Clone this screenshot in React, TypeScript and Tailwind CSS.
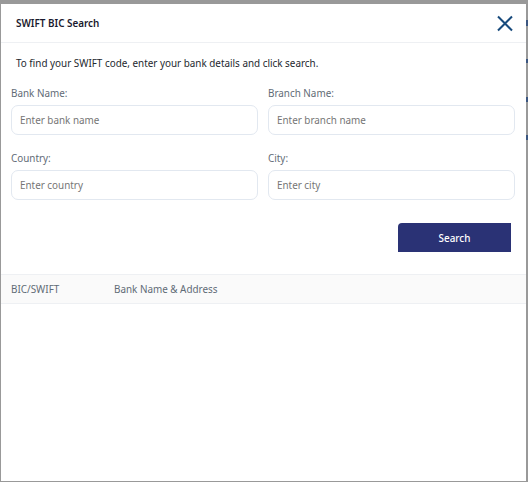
const FIELDS = [
  [
    { label: "Bank Name:", placeholder: "Enter bank name" },
    { label: "Branch Name:", placeholder: "Enter branch name" },
  ],
  [
    { label: "Country:", placeholder: "Enter country" },
    { label: "City:", placeholder: "Enter city" },
  ],
];

// bits of the page behind the modal that show in the right edge
const BEHIND = [
  { top: 20, height: 6 },
  { top: 59, height: 4 },
  { top: 97, height: 5 },
  { top: 135, height: 5 },
];

function Field({ label, placeholder }: { label: string; placeholder: string }) {
  return (
    <div className="flex flex-col">
      <label className="h-[22px] text-[9.9px] leading-[20px] text-[#5f6b76]">
        {label}
      </label>
      <input
        placeholder={placeholder}
        className="h-[30px] w-full rounded-[7px] border border-[#e2e8f0] bg-white px-[8px] text-[9.9px] text-[#5f6b76] outline-none placeholder:text-[#757575]"
      />
    </div>
  );
}

export default function App() {
  return (
    <div className="relative h-[482px] w-[528px] overflow-hidden bg-[#999999] pt-[4px] pb-[1px] pl-[1px] pr-[2px] font-['Noto_Sans',sans-serif]">
      {BEHIND.map((b) => (
        <div
          key={b.top}
          className="absolute right-0 w-[2px] bg-[#3b5680]"
          style={{ top: b.top, height: b.height }}
        />
      ))}
      <div className="flex h-full flex-col bg-white">
        <div className="flex h-[39px] shrink-0 items-center justify-between border-b border-[#eef0f3] pl-[15px] pr-[13px]">
          <h1 className="text-[9.9px] font-semibold text-[#1a1a2e]">
            SWIFT BIC Search
          </h1>
          <button type="button" className="text-[#174a7c]">
            <svg width="17" height="17" viewBox="0 0 17 17" fill="none">
              <path
                d="M2 1.5L16 15.5M16 1.5L2 15.5"
                stroke="currentColor"
                strokeWidth="2"
              />
            </svg>
          </button>
        </div>

        <p className="pt-[12px] pl-[15px] text-[9.9px] leading-[16px] text-[#23272e]">
          To find your SWIFT code, enter your bank details and click search.
        </p>

        <div className="flex flex-col gap-[13px] pt-[12px] pl-[10px] pr-[11px]">
          {FIELDS.map((row) => (
            <div key={row[0].label} className="grid grid-cols-[247px_247px] gap-[10px]">
              {row.map((f) => (
                <Field key={f.label} {...f} />
              ))}
            </div>
          ))}
        </div>

        <div className="flex justify-end pt-[23px] pr-[15px]">
          <button
            type="button"
            className="h-[29px] w-[113px] rounded-tl-[4px] bg-[#2a3275] pt-[1px] text-[9.9px] font-medium text-white"
          >
            Search
          </button>
        </div>

        <div className="mt-[22px] flex h-[30px] shrink-0 items-center border-y border-[#eef0f3] bg-[#fafafa] pl-[10px] pt-[1px] text-[9.9px] text-[#5f6b76]">
          <span className="w-[103px]">BIC/SWIFT</span>
          <span>Bank Name &amp; Address</span>
        </div>
      </div>
    </div>
  );
}
